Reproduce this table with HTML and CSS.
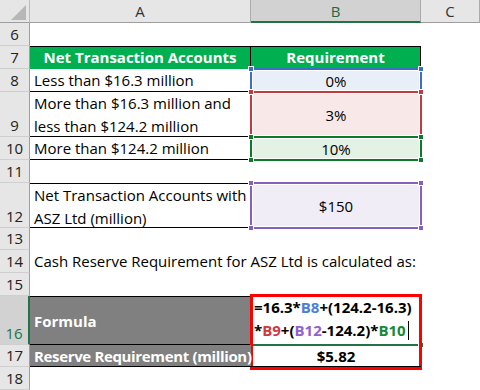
FILE: index.html
```html
<!DOCTYPE html>
<html>
<head>
<meta charset="utf-8">
<link rel="stylesheet" href="styles.css">
</head>
<body>
<div class="sheet">
  <div class="corner"><svg width="30" height="23" viewBox="0 0 30 23"><polygon points="26,5 26,20 11,20" fill="#b7b7b7"/></svg></div>
  <div class="ch">A</div>
  <div class="ch sel">B</div>
  <div class="ch">C</div>

  <div class="rh">6</div><div class="c"></div><div class="c"></div><div class="c"></div>

  <div class="rh">7</div>
  <div class="c hdr hl">Net Transaction Accounts</div>
  <div class="c hdr hr">Requirement</div>
  <div class="c"></div>

  <div class="rh">8</div>
  <div class="c a bb">Less than $16.3 million</div>
  <div class="c b fill-blue"><span>0%</span><div class="range r-blue"><i class="tl"></i><i class="tr"></i><i class="bl"></i><i class="br"></i></div></div>
  <div class="c"></div>

  <div class="rh">9</div>
  <div class="c a bb wrap">More than $16.3 million and<br>less than $124.2 million</div>
  <div class="c b fill-red"><span>3%</span><div class="range r-red"><i class="tl"></i><i class="tr"></i><i class="bl"></i><i class="br"></i></div></div>
  <div class="c"></div>

  <div class="rh">10</div>
  <div class="c a bb">More than $124.2 million</div>
  <div class="c b fill-green"><span>10%</span><div class="range r-green"><i class="tl"></i><i class="tr"></i><i class="bl"></i><i class="br"></i></div></div>
  <div class="c"></div>

  <div class="rh">11</div><div class="c"></div><div class="c"></div><div class="c"></div>

  <div class="rh">12</div>
  <div class="c a bt bb wrap">Net Transaction Accounts with<br>ASZ Ltd (million)</div>
  <div class="c b fill-purple"><span>$150</span><div class="range r-purple"><i class="tl"></i><i class="tr"></i><i class="bl"></i><i class="br"></i></div></div>
  <div class="c"></div>

  <div class="rh">13</div><div class="c"></div><div class="c"></div><div class="c"></div>

  <div class="rh">14</div>
  <div class="c a span">Cash Reserve Requirement for ASZ Ltd is calculated as:</div>
  <div class="c"></div>

  <div class="rh">15</div><div class="c"></div><div class="c"></div><div class="c"></div>

  <div class="rh selr">16</div>
  <div class="c gray bt bb">Formula</div>
  <div class="c formula">=16.3*<span class="f-blue">B8</span>+(124.2-16.3)<br>*<span class="f-red">B9</span>+(<span class="f-purple">B12</span>-124.2)*<span class="f-green">B10</span><span class="caret"></span>
    <div class="active"><i class="handle"></i></div>
    <div class="redbox"></div>
  </div>
  <div class="c"></div>

  <div class="rh">17</div>
  <div class="c gray bb tight">Reserve Requirement (million)</div>
  <div class="c b result">$5.82</div>
  <div class="c"></div>

  <div class="rh">18</div><div class="c"></div><div class="c"></div><div class="c"></div>
</div>
</body>
</html>
```
FILE: styles.css
```css
* { box-sizing: border-box; margin: 0; padding: 0; }
html, body { width: 480px; height: 390px; overflow: hidden; background: #fff; }
body {
  font-family: "Open Sans", Lato, "Liberation Sans", sans-serif;
  font-size: 15px;
  color: #000;
}
.sheet {
  display: grid;
  grid-template-columns: 30px 221px 170px 59px;
  grid-template-rows: 23px 23px 23px 23px 45px 23px 23px 45px 22px 23px 23px 49px 22px 23px;
  width: 480px;
  height: 390px;
}
.corner {
  background: #e6e6e6;
  border-right: 1px solid #bcbcbc;
  border-bottom: 1px solid #9e9e9e;
}
.corner svg { display: block; }
.ch {
  background: #e6e6e6;
  border-right: 1px solid #ababab;
  border-bottom: 1px solid #9e9e9e;
  display: flex;
  align-items: center;
  justify-content: center;
  color: #333;
  font-size: 15px;
}
.ch.sel {
  background: #d2d2d2;
  color: #1f6a44;
  border-bottom: 2px solid #217346;
}
.rh {
  background: #e6e6e6;
  border-right: 1px solid #9e9e9e;
  border-bottom: 1px solid #cfcfcf;
  display: flex;
  align-items: flex-end;
  justify-content: center;
  line-height: 22px;
  color: #222;
}
.rh.selr {
  background: #d2d2d2;
  color: #217346;
  border-right: 2px solid #217346;
}
.c {
  position: relative;
  line-height: 22px;
  white-space: nowrap;
}
.a { padding-left: 4px; }
.wrap {
  line-height: 23px;
}
.span { grid-column: 2 / 4; }
.bb { border-bottom: 1px solid #000; }
.bt { border-top: 1px solid #000; }
.hdr {
  background: #00b050;
  color: #fff;
  font-weight: bold;
  text-align: center;
  border-top: 1px solid #000;
  line-height: 21px;
}
.hl { border-right: 1px solid #000; }
.hr { border-right: 1px solid #000; }
.b {
  display: flex;
  align-items: center;
  justify-content: center;
}
.fill-blue { background: #e8eff8; }
.fill-red { background: #f9e8e8; }
.fill-green { background: #e4f1e5; }
.fill-purple { background: #f0edf7; }
.range {
  position: absolute;
  top: -1px; left: -1px; right: -1px; bottom: -1px;
  border: 2px solid;
  box-shadow: inset 0 0 0 1px #fff;
}
.range i {
  position: absolute;
  width: 6px; height: 6px;
  background: currentColor;
  border: 1px solid #fff;
}
.range .tl { top: -4px; left: -4px; }
.range .tr { top: -4px; right: -4px; }
.range .bl { bottom: -4px; left: -4px; }
.range .br { bottom: -4px; right: -4px; }
.r-blue { color: #3b6fc4; border-color: #3b6fc4; }
.r-red { color: #c4393c; border-color: #c4393c; }
.r-green { color: #0c7a28; border-color: #0c7a28; }
.r-purple { color: #8560bd; border-color: #8560bd; }

.gray {
  background: #808080;
  color: #fff;
  font-weight: bold;
  padding-left: 4px;
  display: flex;
  align-items: center;
}
.tight { letter-spacing: -0.35px; }
.formula {
  font-weight: bold;
  line-height: 23px;
  padding-left: 3px;
  white-space: nowrap;
}
.f-blue { color: #4a7fd8; }
.f-red { color: #d03a3f; }
.f-purple { color: #9162cc; }
.f-green { color: #138a33; }
.caret {
  display: inline-block;
  width: 1px;
  height: 19px;
  background: #000;
  vertical-align: -4px;
  margin-left: 2px;
}
.active {
  position: absolute;
  left: 0; right: 0; bottom: -1px;
  height: 2px;
  background: #217346;
}
.handle {
  position: absolute;
  right: -3px; top: -2px;
  width: 6px; height: 6px;
  background: #217346;
  border: 1px solid #fff;
}
.redbox {
  position: absolute;
  top: -2px; left: -1px;
  width: 172px; height: 76px;
  border: 3px solid #ff0000;
}
.result {
  font-weight: bold;
  border-bottom: 1px solid #000;
}
```
